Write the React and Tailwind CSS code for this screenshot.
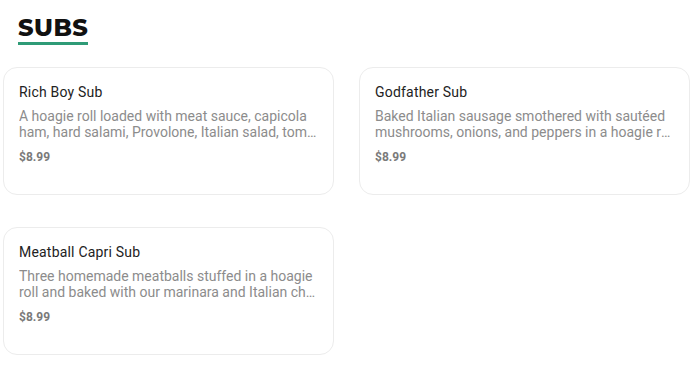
import React from "react";

const items = [
  {
    name: "Rich Boy Sub",
    l1: "A hoagie roll loaded with meat sauce, capicola",
    l2: "ham, hard salami, Provolone, Italian salad, tomatoes, and more.",
    price: "$8.99",
  },
  {
    name: "Godfather Sub",
    l1: "Baked Italian sausage smothered with sautéed",
    l2: "mushrooms, onions, and peppers in a hoagie roll with cheese.",
    price: "$8.99",
  },
  {
    name: "Meatball Capri Sub",
    l1: "Three homemade meatballs stuffed in a hoagie",
    l2: "roll and baked with our marinara and Italian cheese blend.",
    price: "$8.99",
  },
];

export default function App() {
  return (
    <div className="w-[693px] h-[371px] bg-white overflow-hidden font-['Roboto',sans-serif]">
      <div className="pl-[18px] pt-[15px]">
        <h2 className="inline-block font-['Montserrat','Lato','DejaVu_Sans',sans-serif] font-extrabold text-[24px] leading-[26px] tracking-[0.5px] text-[#111] border-b-[3px] border-[#2f9b77] pb-[1px]">
          SUBS
        </h2>
      </div>
      <div className="grid grid-cols-2 gap-x-[25px] gap-y-[32px] px-[3px] mt-[22px]">
        {items.map((it) => (
          <div
            key={it.name}
            className="h-[128px] rounded-[14px] border border-[#ececec] bg-white px-[15px] pt-[15px]"
          >
            <div className="text-[14px] leading-[18px] text-[#222] tracking-[0.2px]">{it.name}</div>
            <div className="mt-[7px] text-[14px] leading-[16px] text-[#8c8c8c]">
              <div className="whitespace-nowrap overflow-hidden">{it.l1}</div>
              <div className="whitespace-nowrap overflow-hidden text-ellipsis">{it.l2}</div>
            </div>
            <div className="mt-[10px] text-[12px] leading-[14px] font-bold text-[#7a7a7a]">{it.price}</div>
          </div>
        ))}
      </div>
    </div>
  );
}
